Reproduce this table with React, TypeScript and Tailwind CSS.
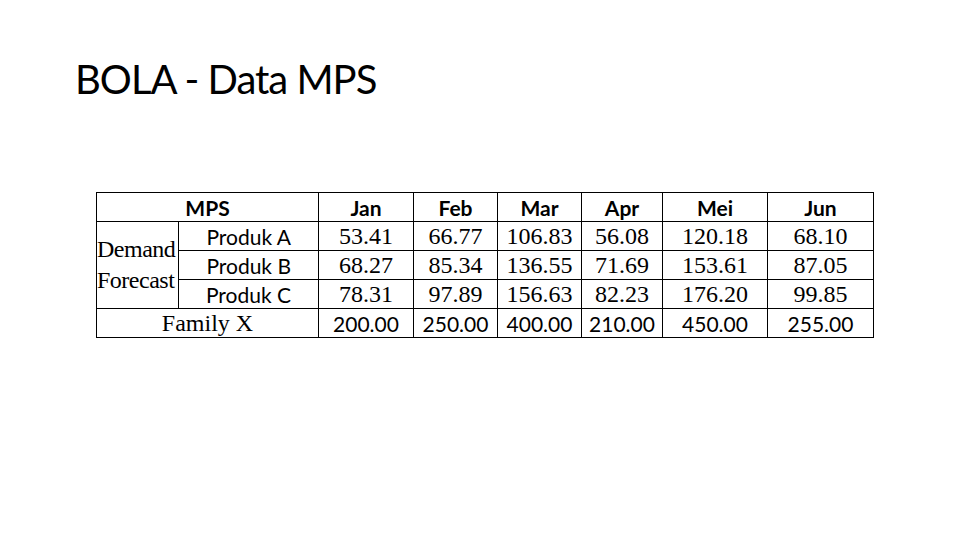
const MONTHS = ["Jan", "Feb", "Mar", "Apr", "Mei", "Jun"];

const ROWS = [
  { name: "Produk A", values: ["53.41", "66.77", "106.83", "56.08", "120.18", "68.10"] },
  { name: "Produk B", values: ["68.27", "85.34", "136.55", "71.69", "153.61", "87.05"] },
  { name: "Produk C", values: ["78.31", "97.89", "156.63", "82.23", "176.20", "99.85"] },
];

const TOTALS = ["200.00", "250.00", "400.00", "210.00", "450.00", "255.00"];

const SANS = "font-['Lato',sans-serif]";
const SERIF = "font-['Liberation_Serif',serif]";

export default function App() {
  return (
    <div className="w-[960px] h-[540px] bg-white text-black overflow-hidden">
      <h1 className={`${SANS} text-[40px] leading-none pt-[59px] pl-[75px] tracking-[-1px]`}>
        BOLA - Data MPS
      </h1>
      <div className="pl-[96px] pt-[93px]">
        <table className="border-collapse table-fixed w-[777px]">
          <colgroup>
            <col className="w-[82px]" />
            <col className="w-[140px]" />
            <col className="w-[95px]" />
            <col className="w-[84px]" />
            <col className="w-[84px]" />
            <col className="w-[81px]" />
            <col className="w-[105px]" />
            <col className="w-[106px]" />
          </colgroup>
          <thead>
            <tr className="h-[29px]">
              <th colSpan={2} className={`${SANS} border border-black text-[21px] font-bold leading-none p-0`}>
                MPS
              </th>
              {MONTHS.map(m => (
                <th key={m} className={`${SANS} border border-black text-[21px] font-bold leading-none p-0`}>
                  {m}
                </th>
              ))}
            </tr>
          </thead>
          <tbody>
            {ROWS.map((r, i) => (
              <tr key={r.name} className="h-[29px]">
                {i === 0 && (
                  <td rowSpan={3} className={`${SERIF} border border-black text-[24px] leading-[31px] p-0 text-left align-middle whitespace-nowrap`}>
                    <div className="-mr-3 tracking-[-0.5px]">Demand<br />Forecast</div>
                  </td>
                )}
                <td className={`${SANS} border border-black text-[21px] leading-none p-0 text-right pr-[27px]`}>
                  {r.name}
                </td>
                {r.values.map((v, j) => (
                  <td key={j} className={`${SERIF} border border-black text-[24px] leading-none p-0 text-center`}>
                    {v}
                  </td>
                ))}
              </tr>
            ))}
            <tr className="h-[29px]">
              <td colSpan={2} className={`${SERIF} border border-black text-[24px] leading-none p-0 text-center`}>
                Family X
              </td>
              {TOTALS.map((v, j) => (
                <td key={j} className={`${SANS} border border-black text-[21px] leading-none p-0 text-center`}>
                  {v}
                </td>
              ))}
            </tr>
          </tbody>
        </table>
      </div>
    </div>
  );
}
